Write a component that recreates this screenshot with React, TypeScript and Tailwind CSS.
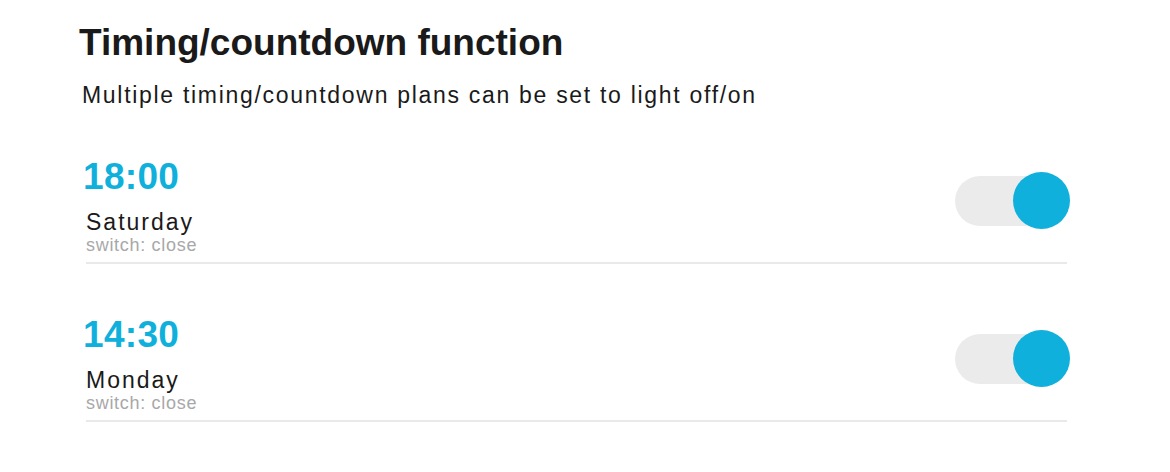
import React from 'react';

interface Plan {
  time: string;
  day: string;
  status: string;
  on: boolean;
}

const plans: Plan[] = [
  { time: '18:00', day: 'Saturday', status: 'switch: close', on: true },
  { time: '14:30', day: 'Monday', status: 'switch: close', on: true },
];

const Toggle: React.FC<{ on: boolean }> = ({ on }) => (
  <div className="relative w-[115px] h-[57px] -mr-[3px] mt-[15px] flex items-center">
    <div className="w-[108px] h-[50px] rounded-full bg-[#ebebeb]" />
    <div
      className={`absolute top-0 w-[57px] h-[57px] rounded-full ${on ? 'right-0 bg-[#0fb0dc]' : 'left-0 bg-white'}`}
    />
  </div>
);

const PlanRow: React.FC<{ plan: Plan }> = ({ plan }) => (
  <div className="flex items-start justify-between border-b-2 border-[#e9e9e9] pb-[7px]">
    <div className="flex flex-col">
      <span className="-ml-[3px] text-[37px] leading-[40px] font-bold tracking-[0.3px] text-[#0fb0dc]">{plan.time}</span>
      <span className="mt-[12px] text-[23px] leading-[26px] tracking-[2px] text-[#1a1a1a]">{plan.day}</span>
      <span className="text-[18px] leading-[20px] tracking-[0.7px] text-[#a8a8a8]">{plan.status}</span>
    </div>
    <Toggle on={plan.on} />
  </div>
);

export default function App() {
  return (
    <div className="w-[1170px] h-[472px] bg-white pl-[79px] pt-[21px] font-['Liberation_Sans',Arial,sans-serif]">
      <h1 className="text-[37px] leading-[44px] font-bold text-[#1a1a1a]">
        Timing/countdown function
      </h1>
      <p className="mt-[16px] ml-[3px] text-[23px] leading-[28px] tracking-[1.7px] text-[#1a1a1a]">
        Multiple timing/countdown plans can be set to light off/on
      </p>
      <div className="ml-[7px] w-[981px] mt-[48px] flex flex-col gap-[51px]">
        {plans.map((p) => (
          <PlanRow key={p.time} plan={p} />
        ))}
      </div>
    </div>
  );
}
